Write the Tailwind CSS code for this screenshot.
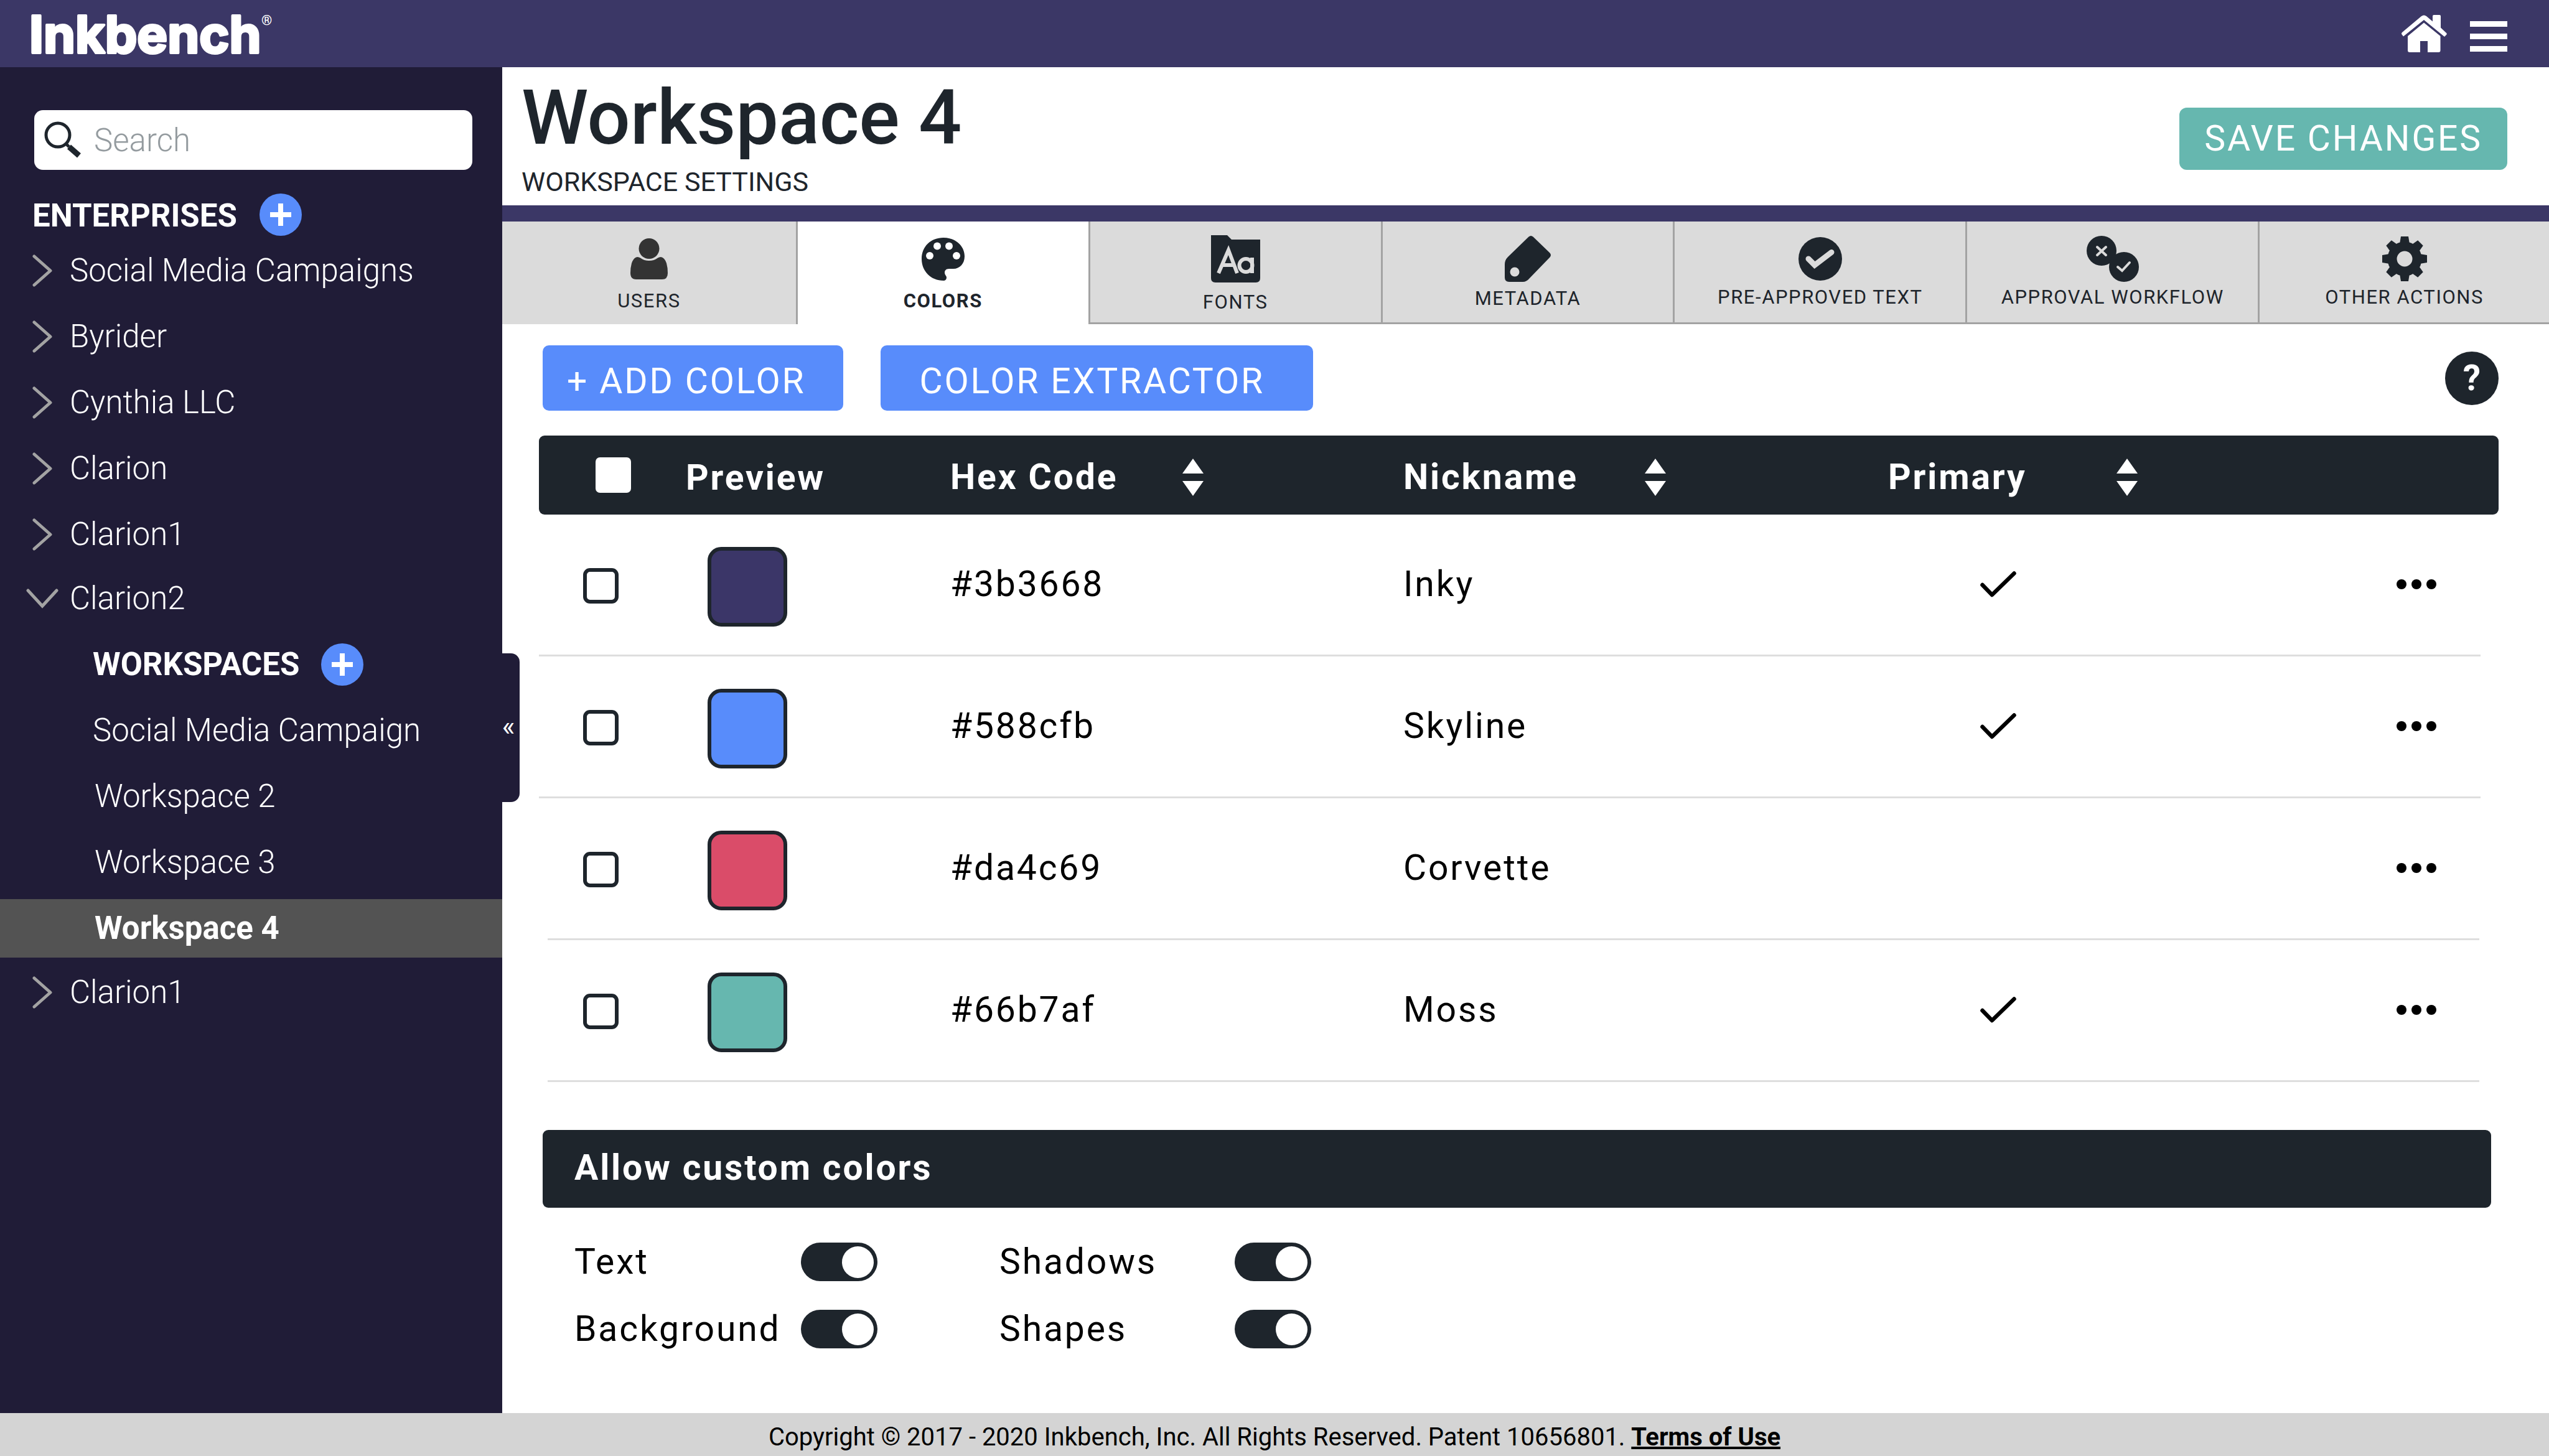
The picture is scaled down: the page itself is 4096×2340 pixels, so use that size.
<!DOCTYPE html>
<html lang="en">
<head>
<meta charset="utf-8">
<title>Inkbench – Workspace 4</title>
<script src="https://cdn.jsdelivr.net/npm/@tailwindcss/browser@4"></script>
</head>
<body class="flex min-h-screen flex-col bg-white font-[Roboto,sans-serif] text-[#1e252c]">

<svg class="hidden" aria-hidden="true">
  <symbol id="chevron-right" viewBox="0 0 52 52"><path d="M13 3 39 26 13 49" fill="none" stroke="#a3a3a3" stroke-width="5" stroke-linecap="round" stroke-linejoin="round"/></symbol>
  <symbol id="chevron-down" viewBox="0 0 52 52"><path d="M3 13 26 38 49 13" fill="none" stroke="#a3a3a3" stroke-width="5" stroke-linecap="round"/></symbol>
  <symbol id="plus" viewBox="0 0 68 68"><circle cx="34" cy="34" r="34" fill="#588cfb"/><path d="M34 16v36M17 34h34" stroke="#fff" stroke-width="8"/></symbol>
  <symbol id="sort" viewBox="0 0 34 60"><path d="M17 0 34 24H0zM17 60 34 36H0z" fill="#fff"/></symbol>
  <symbol id="tick" viewBox="0 0 58 42"><path d="M3.500 22 19 38 54.500 3.500" fill="none" stroke="#000" stroke-width="6.500" stroke-linecap="round" stroke-linejoin="round"/></symbol>
  <symbol id="dots" viewBox="0 0 64 16"><circle cx="8" cy="8" r="8"/><circle cx="32" cy="8" r="8"/><circle cx="56" cy="8" r="8"/></symbol>
</svg>

<header class="flex h-[108px] items-center justify-between bg-[#3b3766] pr-[67px] pl-[48px]">
  <a href="#" aria-label="Inkbench">
    <svg class="h-[108px] w-[420px]" viewBox="0 0 420 108" fill="#fff">
      <text x="-1" y="85" font-family="Inter, sans-serif" font-weight="700" font-size="82" stroke="#fff" stroke-width="4" stroke-linejoin="round">Inkbench</text>
      <text x="372" y="40" font-family="Roboto, sans-serif" font-weight="700" font-size="22">®</text>
    </svg>
  </a>
  <nav class="flex items-center gap-[37px] pt-2">
    <a href="#" aria-label="Home">
      <svg class="mb-2 h-[60px] w-[74px]" viewBox="0 0 74 60" fill="#fff">
        <path d="M4 34.500 2 32Q0 30 2 28L33 2Q37-1 41 2L51 10.500V2q0-2 2-2h9q2 0 2 2v18.500L72 28q3 2 1 4l-3 3L37 8z"/>
        <path d="M37 12.500 63.500 34v23q0 3-3 3H43V42H31v18H14q-3 0-3-3V34z"/>
      </svg>
    </a>
    <button type="button" aria-label="Menu" class="flex flex-col gap-[11px]">
      <span class="h-[9px] w-[60px] bg-white"></span>
      <span class="h-[9px] w-[60px] bg-white"></span>
      <span class="h-[9px] w-[60px] bg-white"></span>
    </button>
  </nav>
</header>

<div class="flex flex-1">
  <aside class="relative w-[807px] shrink-0 bg-[#201c37] pt-[69px] text-[51px] leading-[60px] font-light text-white">
    <label class="mr-[48px] ml-[55px] flex h-[96px] items-center rounded-[14px] bg-white pl-[16px]">
      <svg class="h-[60px] w-[60px] shrink-0" viewBox="0 0 60 60" fill="none" stroke="#1e252c">
        <circle cx="22" cy="22" r="19" stroke-width="5"/><path d="M35 36 40 41" stroke-width="5"/><path d="M40 41 56 55" stroke-width="9"/>
      </svg>
      <input type="search" aria-label="Search" placeholder="Search" class="ml-[20px] h-full w-full bg-transparent font-light text-[#1e252c] outline-none placeholder:text-[#949b9f]">
    </label>

    <div class="mt-[38px] flex h-[68px] items-center gap-[36px] pl-[52px]">
      <h2 class="pt-[3px] font-bold">ENTERPRISES</h2>
      <button type="button" aria-label="Add enterprise"><svg class="size-[68px]"><use href="#plus"/></svg></button>
    </div>

    <ul class="mt-1.5 flex flex-col gap-[6px]">
      <li class="py-[3px]"><a href="#" class="flex h-[94px] items-center gap-[18px] pl-[42px]"><svg class="size-[52px]"><use href="#chevron-right"/></svg>Social Media Campaigns</a></li>
      <li class="py-[3px]"><a href="#" class="flex h-[94px] items-center gap-[18px] pl-[42px]"><svg class="size-[52px]"><use href="#chevron-right"/></svg>Byrider</a></li>
      <li class="py-[3px]"><a href="#" class="flex h-[94px] items-center gap-[18px] pl-[42px]"><svg class="size-[52px]"><use href="#chevron-right"/></svg>Cynthia LLC</a></li>
      <li class="py-[3px]"><a href="#" class="flex h-[94px] items-center gap-[18px] pl-[42px]"><svg class="size-[52px]"><use href="#chevron-right"/></svg>Clarion</a></li>
      <li class="py-[3px]"><a href="#" class="flex h-[94px] items-center gap-[18px] pl-[42px]"><svg class="size-[52px]"><use href="#chevron-right"/></svg>Clarion1</a></li>
      <li>
        <a href="#" class="flex h-[94px] items-center gap-[18px] pl-[42px]"><svg class="size-[52px]"><use href="#chevron-down"/></svg>Clarion2</a>
        <div class="mt-3 flex h-[94px] items-center gap-[35px] pl-[149px]">
          <h3 class="font-bold">WORKSPACES</h3>
          <button type="button" aria-label="Add workspace"><svg class="size-[68px]"><use href="#plus"/></svg></button>
        </div>
        <ul class="mt-3 flex flex-col gap-3">
          <li><a href="#" class="flex h-[94px] items-center pl-[149px]">Social Media Campaign</a></li>
          <li><a href="#" class="flex h-[94px] items-center pl-[152px]">Workspace 2</a></li>
          <li><a href="#" class="flex h-[94px] items-center pl-[152px]">Workspace 3</a></li>
          <li><a href="#" aria-current="page" class="flex h-[94px] items-center bg-[#535353] pl-[152px] font-bold">Workspace 4</a></li>
        </ul>
      </li>
      <li class="py-[3px]"><a href="#" class="flex h-[94px] items-center gap-[18px] pl-[42px]"><svg class="size-[52px]"><use href="#chevron-right"/></svg>Clarion1</a></li>
    </ul>

    <button type="button" aria-label="Collapse sidebar" class="absolute top-[942px] left-full flex h-[239px] w-[28px] items-center justify-center rounded-r-[14px] bg-[#201c37] pr-[8px] pb-[6px] text-[44px] font-normal">«</button>
  </aside>

  <main class="flex min-w-0 flex-1 flex-col">
    <div class="flex h-[222px] items-start justify-between pt-[21px] pr-[67px] pl-[31px]">
      <div>
        <h1 class="text-[122px] leading-[122px] font-medium">Workspace 4</h1>
        <p class="mt-4 text-[43px] leading-[50px]">WORKSPACE SETTINGS</p>
      </div>
      <button type="button" class="mt-11 h-[100px] rounded-[12px] bg-[#66b7af] px-[40px] text-[57px] tracking-wider text-white">SAVE CHANGES</button>
    </div>
    <div class="h-[26px] bg-[#3b3766]"></div>

    <nav class="grid h-[165px] grid-cols-[475fr_repeat(5,470fr)_465fr] text-[31px] leading-[32px] tracking-wider">
      <a href="#" class="flex flex-col items-center border-r-3 border-[#a3a3a3] bg-[#dbdbdb] pt-[22px]">
        <span class="flex h-[76px] items-center"><svg class="h-[66px] w-[60px]" viewBox="0 0 60 66" fill="#333"><ellipse cx="30" cy="16.500" rx="16.500" ry="16.500"/><path d="M11 30q3 0 5 1.500 6 4.500 14 4.500t14-4.500q2-1.500 5-1.500 6 1 9 10 2 7 2 16 0 10-9 10H9Q0 66 0 56q0-9 2-16 3-9 9-10z"/></svg></span>
        <span class="mt-[14px]">USERS</span>
      </a>
      <a href="#" aria-current="page" class="flex flex-col items-center border-r-3 border-[#a3a3a3] bg-white pt-[22px] font-bold">
        <span class="flex h-[76px] items-center"><svg class="size-[69px]" viewBox="0 0 69 69"><path fill="#1e252c" d="M35 0C54 0 69 13 69 30c0 12-8 20-18 20h-7c-5 0-7 3-7 6 0 4 3 5 3 8s-2 5-5 5C15 69 0 54 0 34S15 0 35 0z"/><g fill="#fff"><circle cx="25" cy="13.500" r="6"/><circle cx="44" cy="13.500" r="6"/><circle cx="13" cy="29" r="6"/><circle cx="56" cy="29" r="6"/></g></svg></span>
        <span class="mt-[14px]">COLORS</span>
      </a>
      <a href="#" class="flex flex-col items-center border-r-3 border-b-3 border-[#a3a3a3] bg-[#dbdbdb] pt-[22px]">
        <span class="flex h-[76px] items-center"><svg class="h-[76px] w-[79px]" viewBox="0 0 79 76"><path fill="#1e252c" d="M0 0h26l7 7h46v62q0 7-7 7H7q-7 0-7-7z"/><g fill="none" stroke="#dbdbdb" stroke-width="6"><path d="M12 61 28 24 42 61M18 48h19"/><circle cx="56" cy="48.500" r="10.500"/><path d="M66 36v25"/></g></svg></span>
        <span class="mt-4">FONTS</span>
      </a>
      <a href="#" class="flex flex-col items-center border-r-3 border-b-3 border-[#a3a3a3] bg-[#dbdbdb] pt-[22px]">
        <span class="flex h-[76px] items-center"><svg class="size-[74px]" viewBox="0 0 74 74"><path fill="#1e252c" d="M38.500 1.500q3.500-3 7 0L72 27q4 4 0 8L40 68q-5 6-11 6H7q-7 0-7-7V46q0-7 5-12z"/><circle cx="16" cy="58" r="7.500" fill="#dbdbdb"/></svg></span>
        <span class="mt-[10px]">METADATA</span>
      </a>
      <a href="#" class="flex flex-col items-center border-r-3 border-b-3 border-[#a3a3a3] bg-[#dbdbdb] pt-[22px]">
        <span class="flex h-[76px] items-center"><svg class="size-[70px]" viewBox="0 0 70 70"><circle cx="35" cy="35" r="35" fill="#1e252c"/><path d="M16 35 26 45 53 24.500" fill="none" stroke="#dbdbdb" stroke-width="9" stroke-linecap="round"/></svg></span>
        <span class="mt-2">PRE-APPROVED TEXT</span>
      </a>
      <a href="#" class="flex flex-col items-center border-r-3 border-b-3 border-[#a3a3a3] bg-[#dbdbdb] pt-[22px]">
        <span class="flex h-[76px] items-center"><svg class="h-[74px] w-[84px]" viewBox="0 0 84 74"><g fill="#1e252c"><circle cx="24" cy="24" r="24"/><circle cx="60" cy="50" r="24"/></g><g fill="none" stroke="#dbdbdb" stroke-width="4" stroke-linecap="round"><path d="M17 18 31 31M31 18 17 31M50 50 57 56 69 43"/></g></svg></span>
        <span class="mt-2">APPROVAL WORKFLOW</span>
      </a>
      <a href="#" class="flex flex-col items-center border-b-3 border-[#a3a3a3] bg-[#dbdbdb] pt-[22px]">
        <span class="flex h-[76px] items-center"><svg class="size-[72px]" viewBox="-36 -36 72 72" fill="#1e252c">
          <circle r="20" fill="none" stroke="#1e252c" stroke-width="15"/>
          <path id="tooth" d="M-6-36H6L8-24H-8z"/><use href="#tooth" transform="rotate(45)"/><use href="#tooth" transform="rotate(90)"/><use href="#tooth" transform="rotate(135)"/><use href="#tooth" transform="rotate(180)"/><use href="#tooth" transform="rotate(225)"/><use href="#tooth" transform="rotate(270)"/><use href="#tooth" transform="rotate(315)"/>
        </svg></span>
        <span class="mt-2">OTHER ACTIONS</span>
      </a>
    </nav>

    <section class="pt-[34px] pr-[81px] pl-[59px] text-[57px] leading-[64px] tracking-wider text-black">
      <div class="flex items-center gap-[60px] pl-[6px] text-white">
        <button type="button" class="h-[105px] rounded-[10px] bg-[#588cfb] pt-[10px] pr-[60px] pl-[39px] tracking-wider">+ ADD COLOR</button>
        <button type="button" class="h-[105px] rounded-[10px] bg-[#588cfb] pt-[10px] pr-[78px] pl-[63px] tracking-wider">COLOR EXTRACTOR</button>
        <button type="button" aria-label="Help" class="ml-auto size-[86px] rounded-full bg-[#1e252c] text-center font-bold tracking-normal">?</button>
      </div>

      <table class="mt-[40px] w-full table-fixed border-separate border-spacing-0 text-left">
        <colgroup><col class="w-[236px]"><col class="w-[425px]"><col class="w-[728px]"><col class="w-[779px]"><col class="w-[600px]"><col></colgroup>
        <thead>
          <tr class="h-[127px] text-white">
            <th class="rounded-l-[9px] bg-[#1e252c] pl-[91px]"><input type="checkbox" aria-label="Select all colors" class="block size-[57px] appearance-none rounded-[7px] bg-white"></th>
            <th class="bg-[#1e252c] pt-2 font-bold">Preview</th>
            <th class="bg-[#1e252c] pt-1.5 font-bold"><div class="flex items-center"><span class="w-[373px]">Hex Code</span><button type="button" aria-label="Sort by hex code"><svg class="h-[60px] w-[34px]"><use href="#sort"/></svg></button></div></th>
            <th class="bg-[#1e252c] pt-1.5 font-bold"><div class="flex items-center"><span class="w-[388px]">Nickname</span><button type="button" aria-label="Sort by nickname"><svg class="h-[60px] w-[34px]"><use href="#sort"/></svg></button></div></th>
            <th class="bg-[#1e252c] pt-1.5 font-bold"><div class="flex items-center"><span class="w-[367px]">Primary</span><button type="button" aria-label="Sort by primary"><svg class="h-[60px] w-[34px]"><use href="#sort"/></svg></button></div></th>
            <th aria-label="Actions" class="rounded-r-[9px] bg-[#1e252c]"></th>
          </tr>
        </thead>
        <tbody>
          <tr class="h-[228px] bg-[linear-gradient(#dedede,#dedede)] bg-[length:calc(100%-29px)_3px] bg-bottom-left bg-no-repeat">
            <td class="pl-[71px]"><input type="checkbox" aria-label="Select Inky" class="block size-[57px] appearance-none rounded-[11px] border-6 border-[#1e252c]"></td>
            <td class="pt-1 pl-[35px]"><div class="size-[128px] rounded-[22px] border-6 border-[#1e252c] bg-[#3b3668]"></div></td>
            <td class="pb-1">#3b3668</td><td class="pb-1">Inky</td>
            <td class="pb-1 pl-[148px]"><svg role="img" aria-label="Primary" class="h-[42px] w-[58px]"><use href="#tick"/></svg></td>
            <td class="pr-[100px] pb-1"><button type="button" aria-label="Inky actions" class="ml-auto block"><svg class="h-[16px] w-[64px]"><use href="#dots"/></svg></button></td>
          </tr>
          <tr class="h-[228px] bg-[linear-gradient(#dedede,#dedede)] bg-[length:calc(100%-29px)_3px] bg-bottom-left bg-no-repeat">
            <td class="pl-[71px]"><input type="checkbox" aria-label="Select Skyline" class="block size-[57px] appearance-none rounded-[11px] border-6 border-[#1e252c]"></td>
            <td class="pt-1 pl-[35px]"><div class="size-[128px] rounded-[22px] border-6 border-[#1e252c] bg-[#588cfb]"></div></td>
            <td class="pb-1">#588cfb</td><td class="pb-1">Skyline</td>
            <td class="pb-1 pl-[148px]"><svg role="img" aria-label="Primary" class="h-[42px] w-[58px]"><use href="#tick"/></svg></td>
            <td class="pr-[100px] pb-1"><button type="button" aria-label="Skyline actions" class="ml-auto block"><svg class="h-[16px] w-[64px]"><use href="#dots"/></svg></button></td>
          </tr>
          <tr class="h-[228px] bg-[linear-gradient(#dedede,#dedede)] bg-[length:calc(100%-45px)_3px] bg-[position:14px_100%] bg-no-repeat">
            <td class="pl-[71px]"><input type="checkbox" aria-label="Select Corvette" class="block size-[57px] appearance-none rounded-[11px] border-6 border-[#1e252c]"></td>
            <td class="pt-1 pl-[35px]"><div class="size-[128px] rounded-[22px] border-6 border-[#1e252c] bg-[#da4c69]"></div></td>
            <td class="pb-1">#da4c69</td><td class="pb-1">Corvette</td>
            <td></td>
            <td class="pr-[100px] pb-1"><button type="button" aria-label="Corvette actions" class="ml-auto block"><svg class="h-[16px] w-[64px]"><use href="#dots"/></svg></button></td>
          </tr>
          <tr class="h-[228px] bg-[linear-gradient(#dedede,#dedede)] bg-[length:calc(100%-45px)_3px] bg-[position:14px_100%] bg-no-repeat">
            <td class="pl-[71px]"><input type="checkbox" aria-label="Select Moss" class="block size-[57px] appearance-none rounded-[11px] border-6 border-[#1e252c]"></td>
            <td class="pt-1 pl-[35px]"><div class="size-[128px] rounded-[22px] border-6 border-[#1e252c] bg-[#66b7af]"></div></td>
            <td class="pb-1">#66b7af</td><td class="pb-1">Moss</td>
            <td class="pb-1 pl-[148px]"><svg role="img" aria-label="Primary" class="h-[42px] w-[58px]"><use href="#tick"/></svg></td>
            <td class="pr-[100px] pb-1"><button type="button" aria-label="Moss actions" class="ml-auto block"><svg class="h-[16px] w-[64px]"><use href="#dots"/></svg></button></td>
          </tr>
        </tbody>
      </table>

      <h2 class="mt-[77px] mr-[12px] ml-[6px] flex h-[125px] items-center rounded-[9px] bg-[#1e252c] pb-[4px] pl-[51px] font-bold text-white">Allow custom colors</h2>
      <div class="mt-[56px] grid grid-cols-[364px_319px_378px_1fr] items-center gap-y-[46px] pl-[57px]">
        <label for="allow-text" class="leading-[62px]">Text</label>
        <input id="allow-text" type="checkbox" role="switch" checked class="flex h-[62px] w-[123px] appearance-none items-center justify-end rounded-full bg-[#1e252c] pr-[6px] before:size-[51px] before:rounded-full before:bg-white before:content-['']">
        <label for="allow-shadows" class="leading-[62px]">Shadows</label>
        <input id="allow-shadows" type="checkbox" role="switch" checked class="flex h-[62px] w-[123px] appearance-none items-center justify-end rounded-full bg-[#1e252c] pr-[6px] before:size-[51px] before:rounded-full before:bg-white before:content-['']">
        <label for="allow-background" class="leading-[62px]">Background</label>
        <input id="allow-background" type="checkbox" role="switch" checked class="flex h-[62px] w-[123px] appearance-none items-center justify-end rounded-full bg-[#1e252c] pr-[6px] before:size-[51px] before:rounded-full before:bg-white before:content-['']">
        <label for="allow-shapes" class="leading-[62px]">Shapes</label>
        <input id="allow-shapes" type="checkbox" role="switch" checked class="flex h-[62px] w-[123px] appearance-none items-center justify-end rounded-full bg-[#1e252c] pr-[6px] before:size-[51px] before:rounded-full before:bg-white before:content-['']">
      </div>
    </section>
  </main>
</div>

<footer class="flex h-[69px] items-center justify-center bg-[#d4d4d4] pt-[8px] text-[40px] leading-[48px] text-black">
  <p>Copyright © 2017 - 2020 Inkbench, Inc. All Rights Reserved. Patent 10656801. <a href="#" class="font-bold underline">Terms of Use</a></p>
</footer>
</body>
</html>
